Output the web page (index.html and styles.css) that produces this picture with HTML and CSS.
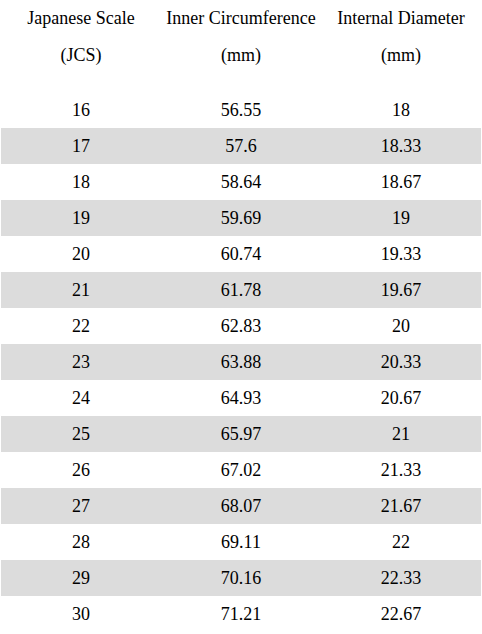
FILE: index.html
```html
<!DOCTYPE html>
<html>
<head>
<meta charset="utf-8">
<link rel="stylesheet" href="styles.css">
</head>
<body>
<table class="sizes">
  <thead>
    <tr>
      <th>Japanese Scale<br>(JCS)</th>
      <th>Inner Circumference<br>(mm)</th>
      <th>Internal Diameter<br>(mm)</th>
    </tr>
  </thead>
  <tbody>
    <tr><td>16</td><td>56.55</td><td>18</td></tr>
    <tr><td>17</td><td>57.6</td><td>18.33</td></tr>
    <tr><td>18</td><td>58.64</td><td>18.67</td></tr>
    <tr><td>19</td><td>59.69</td><td>19</td></tr>
    <tr><td>20</td><td>60.74</td><td>19.33</td></tr>
    <tr><td>21</td><td>61.78</td><td>19.67</td></tr>
    <tr><td>22</td><td>62.83</td><td>20</td></tr>
    <tr><td>23</td><td>63.88</td><td>20.33</td></tr>
    <tr><td>24</td><td>64.93</td><td>20.67</td></tr>
    <tr><td>25</td><td>65.97</td><td>21</td></tr>
    <tr><td>26</td><td>67.02</td><td>21.33</td></tr>
    <tr><td>27</td><td>68.07</td><td>21.67</td></tr>
    <tr><td>28</td><td>69.11</td><td>22</td></tr>
    <tr><td>29</td><td>70.16</td><td>22.33</td></tr>
    <tr><td>30</td><td>71.21</td><td>22.67</td></tr>
  </tbody>
</table>
</body>
</html>
```
FILE: styles.css
```css
html, body {
  margin: 0;
  padding: 0;
  background: #fff;
}
body {
  padding-left: 1px;
  font-family: "Liberation Serif", "Times New Roman", serif;
  font-size: 18px;
  color: #000;
}
.sizes {
  width: 480px;
  border-collapse: collapse;
  table-layout: fixed;
}
.sizes th {
  font-weight: normal;
  line-height: 37px;
  height: 92px;
  padding: 0;
  vertical-align: top;
  text-align: center;
}
.sizes td {
  height: 36px;
  padding: 0;
  line-height: 20px;
  text-align: center;
  vertical-align: middle;
}
.sizes tbody tr:nth-child(even) {
  background: #dcdcdc;
}
```
